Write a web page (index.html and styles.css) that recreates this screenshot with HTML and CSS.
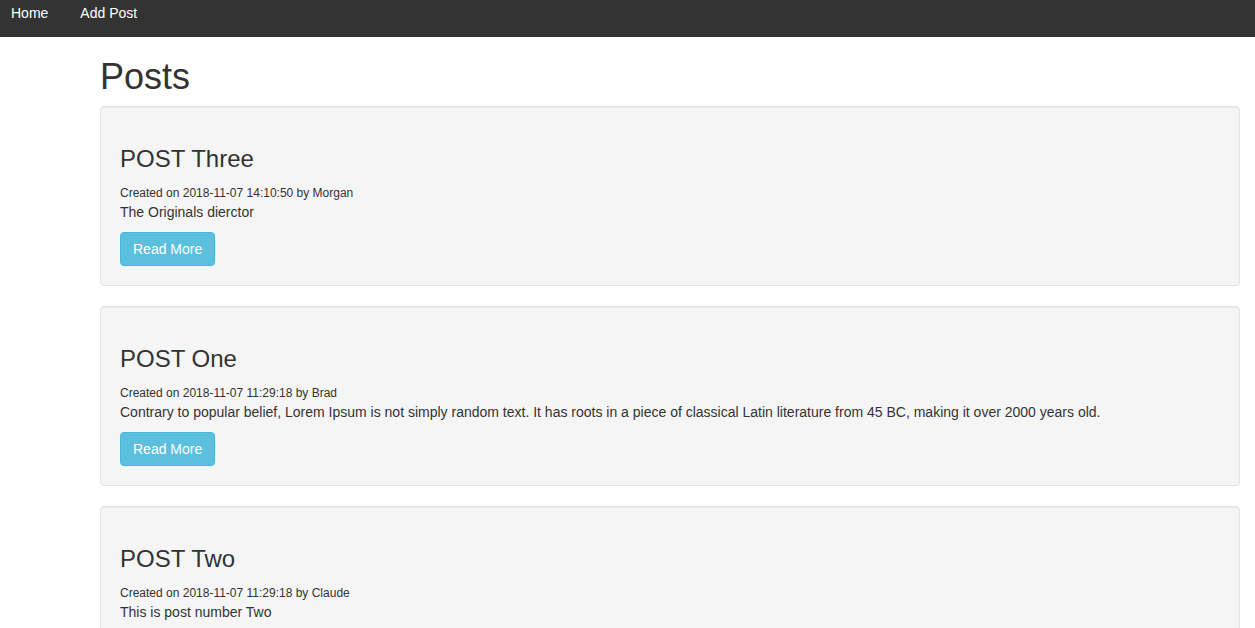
FILE: index.html
```html
<!DOCTYPE html>
<html>
<head>
<meta charset="utf-8">
<title>Posts</title>
<link rel="stylesheet" href="styles.css">
</head>
<body>
<nav class="navbar">
  <a class="nav-link" href="#">Home</a>
  <a class="nav-link" href="#">Add Post</a>
</nav>
<main class="container">
  <h1 class="page-title">Posts</h1>
  <div class="well">
    <h3 class="post-title">POST Three</h3>
    <div class="meta"><small>Created on 2018-11-07 14:10:50 by Morgan</small></div>
    <p class="body">The Originals dierctor</p>
    <a class="btn" href="#">Read More</a>
  </div>
  <div class="well">
    <h3 class="post-title">POST One</h3>
    <div class="meta"><small>Created on 2018-11-07 11:29:18 by Brad</small></div>
    <p class="body">Contrary to popular belief, Lorem Ipsum is not simply random text. It has roots in a piece of classical Latin literature from 45 BC, making it over 2000 years old.</p>
    <a class="btn" href="#">Read More</a>
  </div>
  <div class="well">
    <h3 class="post-title">POST Two</h3>
    <div class="meta"><small>Created on 2018-11-07 11:29:18 by Claude</small></div>
    <p class="body">This is post number Two</p>
    <a class="btn" href="#">Read More</a>
  </div>
</main>
</body>
</html>
```

FILE: styles.css
```css
* { box-sizing: border-box; }
html, body { margin: 0; padding: 0; }
body {
  font-family: "Liberation Sans", Arial, Helvetica, sans-serif;
  font-size: 14px;
  line-height: 20px;
  color: #333;
  background: #fff;
}
.navbar {
  display: flex;
  height: 37px;
  background: #333;
  padding: 3px 0 0 11px;
  gap: 32px;
}
.nav-link {
  color: #fff;
  text-decoration: none;
  font-size: 14px;
  line-height: 20px;
}
.container {
  padding: 0 15px 0 100px;
}
.page-title {
  font-size: 36px;
  font-weight: 500;
  line-height: 39px;
  margin: 20px 0 10px;
}
.well {
  background: #f5f5f5;
  border: 1px solid #e3e3e3;
  border-radius: 4px;
  box-shadow: inset 0 1px 1px rgba(0,0,0,.05);
  padding: 19px;
  margin-bottom: 20px;
}
.post-title {
  font-size: 24px;
  font-weight: 500;
  line-height: 26px;
  margin: 20px 0 10px;
}
.meta {
  font-size: 12px;
  line-height: 20px;
  height: 20px;
  padding-top: 1px;
}
.meta small { font-size: inherit; }
.body { margin: 0 0 10px; }
.btn {
  display: inline-block;
  padding: 6px 12px;
  font-size: 14px;
  line-height: 20px;
  color: #fff;
  background: #5bc0de;
  border: 1px solid #46b8da;
  border-radius: 4px;
  text-decoration: none;
}
```
